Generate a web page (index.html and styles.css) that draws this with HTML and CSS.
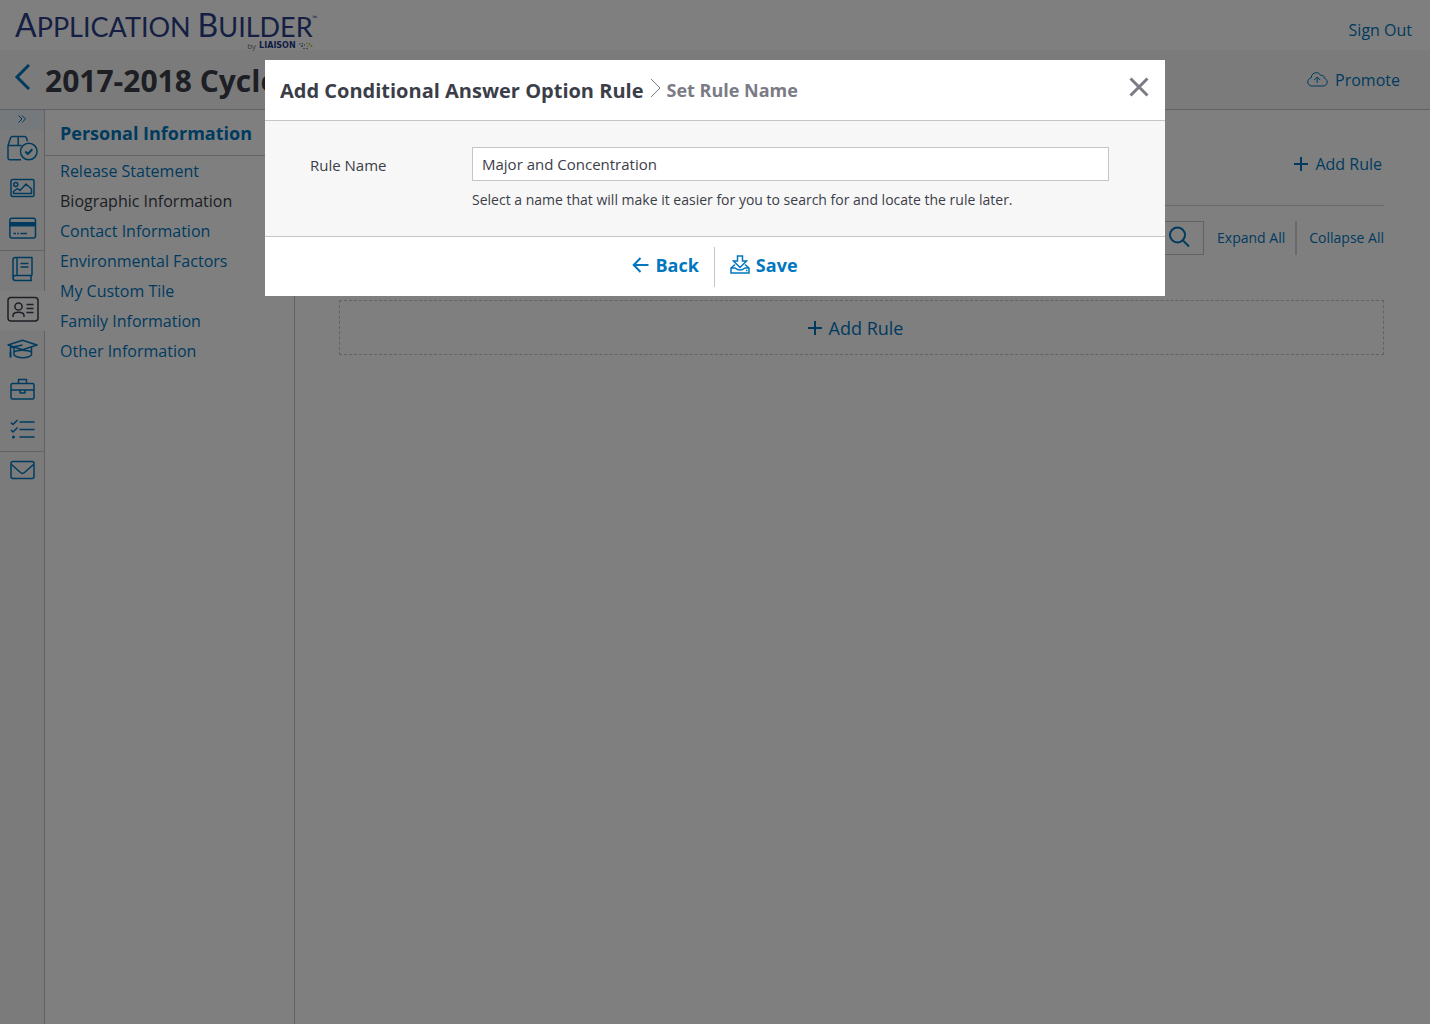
FILE: index.html
```html
<!DOCTYPE html>
<html lang="en">
<head>
  <meta charset="UTF-8">
  <meta name="viewport" content="width=device-width, initial-scale=1.0">
  <title>Application Builder</title>
  <link rel="stylesheet" href="styles.css">
</head>
<body>
  <!-- Top header -->
  <header class="header">
    <a href="#" class="logo">
      <span class="logo-name"><span class="logo-cap">A</span>PPLICATION <span class="logo-cap">B</span>UILDER</span>
      <span class="logo-tm">™</span>
      <span class="logo-by">by <b>LIAISON</b>
        <svg width="14" height="8" viewBox="0 0 14 8">
          <g fill="#b5b03c"><circle cx="8" cy="1" r=".8"/><circle cx="10.500" cy="2" r=".9"/><circle cx="12.500" cy="4" r=".9"/><circle cx="9" cy="4" r=".7"/></g>
          <g fill="#4a6ea8"><circle cx="1" cy="2" r=".8"/><circle cx="3.500" cy="1.500" r=".7"/><circle cx="3" cy="4" r=".9"/><circle cx="5.500" cy="3" r=".7"/><circle cx="5" cy="6.500" r=".8"/><circle cx="8" cy="6.500" r=".8"/></g>
        </svg>
      </span>
    </a>
    <a href="#" class="link">Sign Out</a>
  </header>

  <!-- Cycle title bar -->
  <div class="title-bar">
    <a href="#" class="title-back" aria-label="Back to cycles">
      <svg width="16" height="26" viewBox="0 0 16 26"><path d="M15 1 L3 13 L15 25"/></svg>
    </a>
    <h1>2017-2018 Cycle</h1>
    <a href="#" class="link promote">
      <svg width="21" height="15" viewBox="0 0 21 15"><path d="M5 14 H16 C18.500 14 20.200 12.200 20.200 10 C20.200 8 19 6.600 17.300 6.200 C17.500 4.200 15.600 2.700 13.700 3.400 C12.700 1.500 11 .7 9.200 .7 C6.300 .7 4.200 2.900 4.300 5.800 C2.200 6.300 .7 7.800 .7 10 C.7 12.300 2.600 14 5 14 Z M10.200 11 V5.300 M7.200 8 L10.200 5 L13.200 8"/></svg>
      Promote
    </a>
  </div>

  <div class="layout">
    <!-- Icon rail -->
    <nav class="rail" aria-label="Sections">
      <button class="rail-toggle" aria-label="Expand menu">
        <svg width="8" height="8" viewBox="0 0 8 8"><path d="M.5 .5 L4 4 L.5 7.500 M4 .5 L7.500 4 L4 7.500"/></svg>
      </button>
      <div class="rail-group">
        <a href="#" class="rail-item" aria-label="Products">
          <svg width="32" height="26" viewBox="0.5 0 32 26"><path d="M14.500 24.800 H3.500 Q1.500 24.800 1.500 22.800 V10.500 L4 3 Q4.600 1.500 6 1.500 H18 Q19.500 1.500 20 3 L21 6.300 M1.500 10.500 H15 M11.700 1.500 V10.500"/><circle cx="22.300" cy="16.500" r="8.300"/><path class="thick" d="M18.800 16.500 L21.300 19 L25.800 14.200"/></svg>
        </a>
        <a href="#" class="rail-item" aria-label="Branding">
          <svg width="26" height="20" viewBox="0.5 0 26 20"><rect x="1.500" y="1.500" width="23" height="17" rx="1.500"/><circle cx="6.300" cy="6.500" r="2"/><path d="M4 15.500 V13.500 L8 10.500 L10.500 12.500 L16.500 6 L22 11 V15.500 Z"/></svg>
        </a>
        <a href="#" class="rail-item" aria-label="Payments">
          <svg width="28" height="22" viewBox="0.5 0 28 22"><rect x="1.400" y="1.200" width="25.600" height="19.800" rx="2"/><path class="solid" d="M1 5 H27 V9.500 H1 Z"/><path d="M5 16.500 H7.500 M8.800 16.500 H10.500 M12 16.500 H18.500"/></svg>
        </a>
      </div>
      <div class="rail-group">
        <a href="#" class="rail-item" aria-label="Instructions">
          <svg width="22" height="26" viewBox="0.5 0 22 26"><path d="M20.500 19.500 V1.500 H4 Q1.500 1.500 1.500 4 V22 Q1.500 24.500 4 24.500 H20.500 M20.500 19.500 H4 Q1.500 19.500 1.500 22 M19.500 19.500 V24.500 M5.500 1.500 V19.500 M9 7.500 H17 M9 11 H17"/></svg>
        </a>
        <a href="#" class="rail-item active" aria-label="Personal Information">
          <svg width="32" height="26" viewBox="0 0 32 26"><rect x="1" y="1.500" width="30" height="23.500" rx="3"/><circle cx="11.500" cy="10.500" r="3.600"/><path d="M6 21 V19.500 C6 15 17 15 17 19.500 V21 M19.500 8.500 H26.500 M19.500 12.500 H26.500 M19.500 16.500 H26.500"/></svg>
        </a>
        <a href="#" class="rail-item" aria-label="Academic History">
          <svg width="32" height="20" viewBox="0.5 0 32 20"><path d="M1.500 6 L16 1.200 L30.500 6 L16 10.800 Z M7.500 8.200 V16 C11 19.500 21.500 19.500 25 16 V8.200 M7.500 13 C10 10.500 21 10.500 25 13 M16 6 L4 8.500 V13"/><path class="thick" d="M4 13 V18.500"/></svg>
        </a>
        <a href="#" class="rail-item" aria-label="Experience">
          <svg width="26" height="22" viewBox="0.5 0 26 22"><rect x="1.500" y="5.500" width="23" height="15.500" rx="1.500"/><path d="M9 5.500 V1.500 H17 V5.500 M1.500 12 H24.500 M10.500 12 V15 H15.500 V12"/></svg>
        </a>
        <a href="#" class="rail-item" aria-label="Program Materials">
          <svg width="26" height="20" viewBox="0.5 0 26 20"><path d="M1.500 3.500 L3.500 5.500 L8 1 M1.500 11 L3.500 13 L8 8.500 M10 3 H25 M10 10.500 H25 M10 18 H25"/><circle class="solid" cx="4" cy="18" r="1.500"/></svg>
        </a>
      </div>
      <div class="rail-group">
        <a href="#" class="rail-item" aria-label="Emails">
          <svg width="26" height="20" viewBox="0.5 0 26 20"><rect x="1.500" y="1.500" width="23" height="17" rx="2"/><path d="M2 4.500 L11 12.500 Q13 14.200 15 12.500 L24 4.500"/></svg>
        </a>
      </div>
    </nav>

    <!-- Section menu -->
    <nav class="side-menu">
      <h2>Personal Information</h2>
      <ul>
        <li><a href="#" class="link">Release Statement</a></li>
        <li><a href="#" class="link active">Biographic Information</a></li>
        <li><a href="#" class="link">Contact Information</a></li>
        <li><a href="#" class="link">Environmental Factors</a></li>
        <li><a href="#" class="link">My Custom Tile</a></li>
        <li><a href="#" class="link">Family Information</a></li>
        <li><a href="#" class="link">Other Information</a></li>
      </ul>
    </nav>

    <!-- Rules -->
    <main class="main">
      <div class="main-head">
        <button class="add-rule">
          <svg width="14" height="14" viewBox="0 0 14 14"><path d="M7 0 V14 M0 7 H14"/></svg>
          Add Rule
        </button>
      </div>
      <div class="toolbar">
        <div class="search">
          <input type="text" aria-label="Search rules">
          <button aria-label="Search">
            <svg width="22" height="22" viewBox="0 0 22 22"><circle cx="9.500" cy="9" r="7.500"/><path d="M15 14.500 L21 20.500"/></svg>
          </button>
        </div>
        <button class="tool">Expand All</button>
        <button class="tool">Collapse All</button>
      </div>
      <button class="add-rule add-rule-box">
        <svg width="14" height="14" viewBox="0 0 14 14"><path d="M7 0 V14 M0 7 H14"/></svg>
        Add Rule
      </button>
    </main>
  </div>

  <!-- Add rule modal -->
  <div class="backdrop">
    <form class="modal" role="dialog" aria-labelledby="modal-title">
      <div class="modal-head">
        <h2 id="modal-title">Add Conditional Answer Option Rule</h2>
        <svg class="crumb" width="12" height="20" viewBox="0 0 12 20"><path d="M1 1 L10 10 L1 19"/></svg>
        <h3>Set Rule Name</h3>
        <button type="button" class="close" aria-label="Close">
          <svg width="20" height="20" viewBox="0 0 20 20"><path d="M1.500 1.500 L18.500 18.500 M18.500 1.500 L1.500 18.500"/></svg>
        </button>
      </div>
      <div class="modal-body">
        <label for="rule-name">Rule Name</label>
        <div class="field">
          <input type="text" id="rule-name" value="Major and Concentration" aria-describedby="rule-hint">
          <p id="rule-hint">Select a name that will make it easier for you to search for and locate the rule later.</p>
        </div>
      </div>
      <div class="modal-foot">
        <button type="button">
          <svg width="17" height="16" viewBox="0 0 17 16"><path d="M16.500 8 H2 M8.500 1 L1.700 8 L8.500 15"/></svg>
          Back
        </button>
        <button type="submit">
          <svg class="save-icon" width="20" height="19" viewBox="0 0 20 19"><path d="M7.500 1 H12.500 V6 H16.500 L10 12.500 L3.500 6 H7.500 Z M5 9.500 L1 13 V18 H19 V13 L15 9.500 M1 13 H5 Q10 17 15 13 H19 M16 15.500 H17.500"/></svg>
          Save
        </button>
      </div>
    </form>
  </div>
</body>
</html>
```

FILE: styles.css
```css
/* General reset and styles */
* {
  box-sizing: border-box;
}

body {
  margin: 0;
  min-height: 100vh;
  display: flex;
  flex-direction: column;
  font-family: "Open Sans", sans-serif;
  font-size: 16px;
  line-height: 24px;
  color: #3b3e48;
  background: #fff;
}

h1, h2, h3, p, ul {
  margin: 0;
  padding: 0;
}

button, input {
  font: inherit;
  color: inherit;
}

button {
  border: 0;
  padding: 0;
  background: none;
  color: #0077be;
  cursor: pointer;
}

svg {
  flex: none;
  fill: none;
  stroke: currentColor;
  stroke-width: 2;
}

.link {
  color: #0077be;
  text-decoration: none;
}

.link:hover {
  text-decoration: underline;
}

/* Header */
.header {
  height: 50px;
  padding: 10px 18px 0 15px;
  display: flex;
  justify-content: space-between;
}

.header .link {
  padding-top: 8px;
}

.logo {
  position: relative;
  display: flex;
  flex-direction: column;
  color: #2a3f87;
  text-decoration: none;
}

.logo-name {
  font-family: Lato, sans-serif;
  font-size: 27px;
  line-height: 30px;
}

.logo-cap {
  font-size: 32px;
}

.logo-tm {
  position: absolute;
  left: 100%;
  top: 4px;
  font-size: 6px;
  line-height: 8px;
}

.logo-by {
  display: flex;
  align-items: center;
  justify-content: flex-end;
  gap: 3px;
  font-size: 8px;
  line-height: 8px;
  color: #777;
}

.logo-by b {
  font-family: "DejaVu Sans", sans-serif;
  color: #1f3c8c;
}

.logo-by svg {
  stroke: none;
}

/* Title bar */
.title-bar {
  height: 60px;
  padding: 0 30px 0 14px;
  display: flex;
  align-items: center;
  background: #f7f7f7;
  border-bottom: 1px solid #c5c5c9;
}

.title-bar h1 {
  flex: 1;
  padding: 2px 0 0 15px;
  font-size: 30px;
  line-height: 40px;
}

.title-back {
  height: 32px;
  color: #0077be;
}

.title-back svg {
  stroke-width: 3;
}

.promote {
  display: flex;
  align-items: center;
  gap: 7px;
}

.promote svg {
  stroke-width: 1;
}

/* Page layout */
.layout {
  flex: 1;
  display: flex;
}

.rail {
  width: 45px;
  background: #f7f7f7;
  border-right: 1px solid #c5c5c9;
}

.rail-toggle {
  width: 100%;
  height: 20px;
  padding-bottom: 3px;
  display: flex;
  align-items: center;
  justify-content: center;
  background: #ecf2f8;
}

.rail-toggle svg {
  stroke-width: 1;
}

.rail-group + .rail-group {
  border-top: 1px solid #c5c5c9;
}

.rail-item {
  height: 40px;
  padding: 0 0 4px 1px;
  display: flex;
  align-items: center;
  justify-content: center;
  color: #0077be;
}

.rail-item svg {
  stroke-width: 1.5;
  stroke-linejoin: round;
}

.rail-item .thick {
  stroke-width: 2;
}

.rail-item .solid {
  fill: currentColor;
  stroke: none;
}

.rail-item.active {
  margin-right: -1px;
  padding-left: 0;
  color: #3b3e48;
  background: #fff;
}

.side-menu {
  width: 250px;
  border-right: 1px solid #c5c5c9;
}

.side-menu h2 {
  padding: 11px 15px 10px;
  font-size: 18px;
  line-height: 24px;
  color: #0077be;
  border-bottom: 1px solid #c5c5c9;
}

.side-menu ul {
  list-style: none;
}

.side-menu li {
  padding: 3px 15px;
}

.side-menu .active {
  color: #3b3e48;
}

/* Rules */
.main {
  flex: 1;
  padding: 0 46px 0 44px;
}

.main-head {
  height: 96px;
  padding: 12px 2px 0;
  display: flex;
  align-items: center;
  justify-content: flex-end;
  border-bottom: 1px solid #d5d5d9;
}

.add-rule {
  display: flex;
  align-items: center;
  gap: 7px;
}

.toolbar {
  margin: 15px 0 45px;
  display: flex;
  justify-content: flex-end;
}

.search {
  width: 360px;
  height: 34px;
  margin-right: 13px;
  display: flex;
  border: 1px solid #c5c5c9;
}

.search input {
  flex: 1;
  border: 0;
  background: none;
}

.search button {
  padding: 0 13px 3px 0;
  display: flex;
  align-items: center;
}

.tool {
  font-size: 14px;
}

.tool + .tool {
  margin-left: 10px;
  padding-left: 12px;
  border-left: 2px solid #d5d5d9;
}

.add-rule-box {
  width: 100%;
  height: 55px;
  padding-right: 12px;
  justify-content: center;
  font-size: 18px;
  border: 1px dashed #c5c5c9;
}

/* Modal */
.backdrop {
  position: fixed;
  inset: 0;
  padding: 60px 20px;
  background: rgba(0, 0, 0, 0.5);
}

.modal {
  max-width: 900px;
  margin: 0 auto;
  background: #fff;
}

.modal-head {
  height: 60px;
  padding: 0 16px 0 15px;
  display: flex;
  align-items: center;
}

.modal-head h2 {
  padding-top: 2px;
  font-size: 20px;
}

.modal-head h3 {
  flex: 1;
  font-size: 18px;
  color: #7b7b85;
}

.crumb {
  margin: 0 4px 4px 7px;
  color: #7b7b85;
  stroke-width: 1;
}

.close {
  height: 28px;
  color: #7b7b85;
}

.close svg {
  stroke-width: 3;
}

.modal-body {
  padding: 26px 56px 24px 45px;
  display: flex;
  background: #f7f7f7;
  border-top: 1px solid #c5c5c9;
  border-bottom: 1px solid #c5c5c9;
}

.modal-body label {
  width: 162px;
  padding-top: 6px;
  font-size: 15px;
}

.field {
  flex: 1;
}

.field input {
  width: 100%;
  height: 34px;
  padding: 0 9px;
  display: block;
  font-size: 15px;
  background: #fff;
  border: 1px solid #c5c5c9;
}

.field p {
  margin-top: 7px;
  font-size: 14px;
}

.modal-foot {
  padding: 10px 0 9px;
  display: flex;
  justify-content: center;
}

.modal-foot button {
  height: 40px;
  padding: 0 15px 4px;
  display: flex;
  align-items: center;
  gap: 6px;
  font-size: 18px;
  font-weight: 700;
}

.modal-foot button + button {
  border-left: 1px solid #c5c5c9;
}

.modal-foot svg {
  margin-bottom: 1px;
}

.modal-foot .save-icon {
  stroke-width: 1.5;
}
```
